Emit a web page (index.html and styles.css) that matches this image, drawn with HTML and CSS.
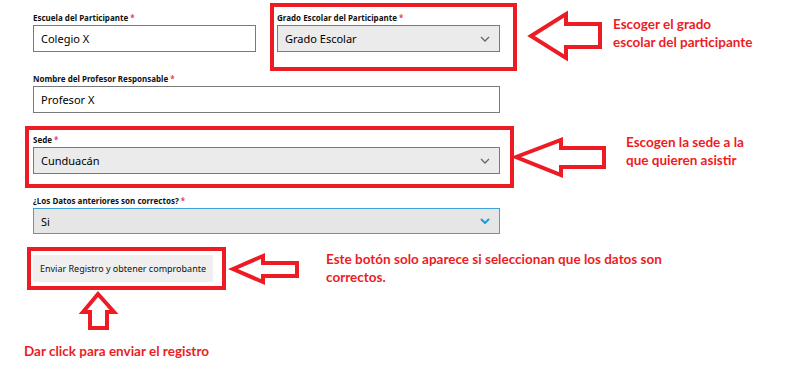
FILE: index.html
```html
<!DOCTYPE html>
<html lang="es">
<head>
    <meta charset="UTF-8">
    <meta name="viewport" content="width=device-width, initial-scale=1.0">
    <title>Registro</title>
    <link rel="stylesheet" href="styles.css">
</head>
<body>
<form class="form">
    <div class="row">
        <div class="field half">
            <label>Escuela del Participante <span class="req">*</span></label>
            <input type="text" value="Colegio X">
        </div>
        <div class="field half">
            <label>Grado Escolar del Participante <span class="req">*</span></label>
            <div class="select">
                <span>Grado Escolar</span>
                <svg width="10" height="6" viewBox="0 0 10 6"><path d="M1 1 L5 5 L9 1" fill="none" stroke="#666" stroke-width="1.3"/></svg>
            </div>
        </div>
    </div>
    <div class="field">
        <label>Nombre del Profesor Responsable <span class="req">*</span></label>
        <input type="text" value="Profesor X">
    </div>
    <div class="field">
        <label>Sede <span class="req">*</span></label>
        <div class="select">
            <span>Cunduacán</span>
            <svg width="10" height="6" viewBox="0 0 10 6"><path d="M1 1 L5 5 L9 1" fill="none" stroke="#666" stroke-width="1.3"/></svg>
        </div>
    </div>
    <div class="field">
        <label>¿Los Datos anteriores son correctos? <span class="req">*</span></label>
        <div class="select focused">
            <span>Si</span>
            <svg width="10" height="6" viewBox="0 0 10 6"><path d="M1 1 L5 5 L9 1" fill="none" stroke="#1e9ad6" stroke-width="2"/></svg>
        </div>
    </div>
    <button type="button" class="submit">Enviar Registro y obtener comprobante</button>
</form>

<!-- annotations drawn over the form -->
<div class="box box1"></div>
<div class="box box2"></div>
<div class="box box3"></div>

<svg class="arrows" width="802" height="371" viewBox="0 0 802 371">
    <g fill="#fff" stroke="#ed1c24" stroke-width="4" stroke-linejoin="miter">
        <polygon points="531,36 566,14 566,24 600,24 600,47 566,47 566,58"/>
        <polygon points="516,157 561,140 561,148 604,148 604,167 561,167 561,175"/>
        <polygon points="233,269 263,256 263,263 297,263 297,276 263,276 263,282"/>
        <polygon points="98,294 114,312 107,312 107,328 90,328 90,312 83,312"/>
    </g>
</svg>

<p class="note note1">Escoger el grado<br>escolar del participante</p>
<p class="note note2">Escogen la sede a la<br>que quieren asistir</p>
<p class="note note3">Este botón solo aparece si seleccionan que los datos son<br>correctos.</p>
<p class="note note4">Dar click para enviar el registro</p>
</body>
</html>
```

FILE: styles.css
```css
body {
    margin: 0;
    background: #fff;
    font-family: "Noto Sans", "Open Sans", sans-serif;
    color: #000;
    width: 802px;
    height: 371px;
    position: relative;
    overflow: hidden;
}

.form {
    padding: 12px 0 0 33px;
    width: 467px;
}

.row {
    display: flex;
    gap: 21px;
}

.field {
    display: flex;
    flex-direction: column;
    margin-bottom: 21px;
}

.half {
    width: 223px;
}

label {
    font-size: 8px;
    font-weight: bold;
    line-height: 11px;
    height: 11px;
    margin-bottom: 2px;
    color: #111;
}

.req {
    color: #e0405a;
}

input {
    box-sizing: border-box;
    height: 27px;
    width: 100%;
    border: 1px solid #7a7a7a;
    padding: 0 7px;
    font-family: inherit;
    font-size: 11px;
    color: #000;
    background: #fff;
    margin: 0;
}

.select {
    box-sizing: border-box;
    height: 27px;
    border: 1px solid #7a7a7a;
    background: #ebebeb;
    display: flex;
    align-items: center;
    justify-content: space-between;
    padding: 0 9px 0 7px;
    font-size: 11px;
}

.select.focused {
    border-color: #3fa2d6;
    background: #e6e6e6;
    height: 26px;
}

.submit {
    height: 27px;
    width: 180px;
    border: none;
    background: #efefef;
    font-family: inherit;
    font-size: 9px;
    color: #111;
    padding: 0;
    margin: 0;
}

.box {
    position: absolute;
    border: 4px solid #ed1c24;
    box-sizing: border-box;
}

.box1 {
    left: 270px;
    top: 3px;
    width: 247px;
    height: 68px;
}

.box2 {
    left: 25px;
    top: 126px;
    width: 489px;
    height: 62px;
}

.box3 {
    left: 27px;
    top: 247px;
    width: 199px;
    height: 43px;
}

.arrows {
    position: absolute;
    left: 0;
    top: 0;
    pointer-events: none;
}

.note {
    position: absolute;
    margin: 0;
    color: #ed1c24;
    font-family: Lato, "Noto Sans", sans-serif;
    font-weight: bold;
    font-size: 13.5px;
    line-height: 18px;
}

.note1 {
    left: 613px;
    top: 15px;
}

.note2 {
    left: 626px;
    top: 133px;
}

.note3 {
    left: 326px;
    top: 250px;
}

.note4 {
    left: 24px;
    top: 342px;
}
```
